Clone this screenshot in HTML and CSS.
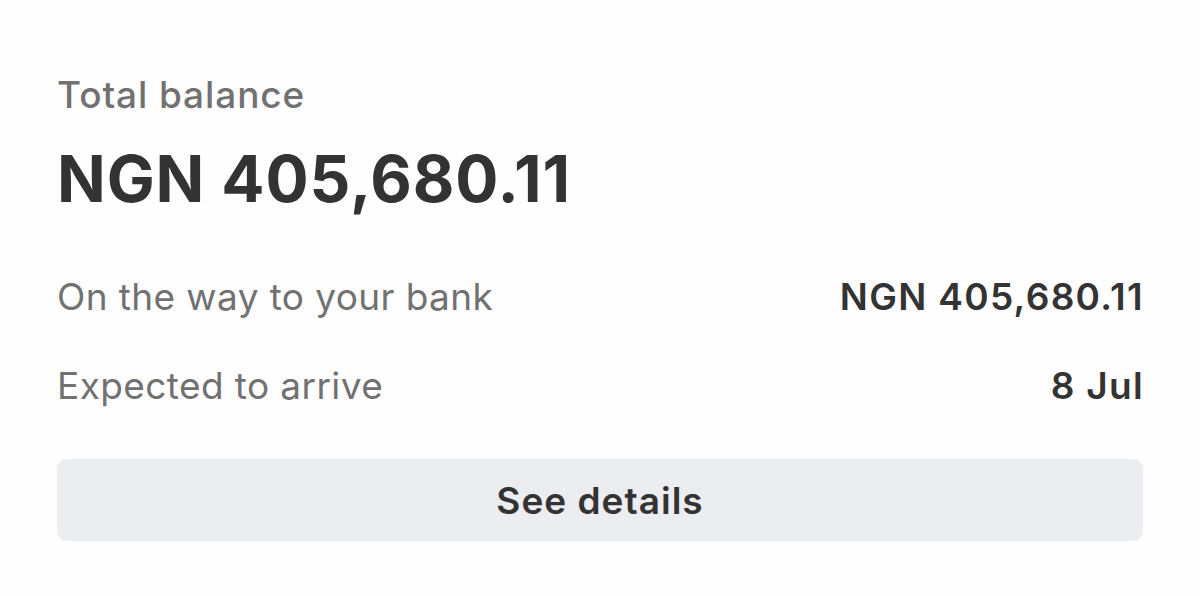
FILE: index.html
```html
<!DOCTYPE html>
<html lang="en">
<head>
  <meta charset="UTF-8" />
  <meta name="viewport" content="width=device-width, initial-scale=1.0" />
  <title>Total balance</title>
  <link rel="stylesheet" href="styles.css">
</head>
<body>
  <main class="balance-card">
    <p class="label">Total balance</p>
    <h1 class="amount">NGN 405,680.11</h1>

    <div class="rows">
      <div class="row">
        <span class="row-name">On the way to your bank</span>
        <span class="row-value">NGN 405,680.11</span>
      </div>
      <div class="row">
        <span class="row-name">Expected to arrive</span>
        <span class="row-value">8 Jul</span>
      </div>
    </div>

    <button class="details-btn" type="button">See details</button>
  </main>
</body>
</html>
```

FILE: styles.css
```css
body {
  margin: 0;
  padding: 0;
  background: #fffefe;
  font-family: Inter, 'Noto Sans', sans-serif;
  color: #333;
}
.balance-card {
  padding: 73px 57px 0 57px;
}
.label {
  margin: 0;
  font-size: 37px;
  line-height: 44px;
  font-weight: 500;
  letter-spacing: 0.9px;
  color: #717171;
}
.amount {
  margin: 24px 0 0;
  font-size: 64px;
  line-height: 76px;
  font-weight: 700;
  letter-spacing: 0.9px;
  color: #333;
}
.rows {
  margin-top: 58px;
  display: flex;
  flex-direction: column;
  gap: 45px;
}
.row {
  display: flex;
  justify-content: space-between;
  font-size: 37px;
  line-height: 44px;
}
.row-name {
  color: #717171;
  letter-spacing: 0.4px;
}
.row-value {
  font-weight: 600;
  letter-spacing: 1.3px;
  margin-right: -1px;
  color: #333;
}
.details-btn {
  display: block;
  width: 100%;
  height: 82px;
  margin-top: 51px;
  border: none;
  border-radius: 9px;
  background: #ecedf1;
  font-family: inherit;
  font-size: 37px;
  font-weight: 600;
  letter-spacing: 1px;
  color: #333;
}
```
